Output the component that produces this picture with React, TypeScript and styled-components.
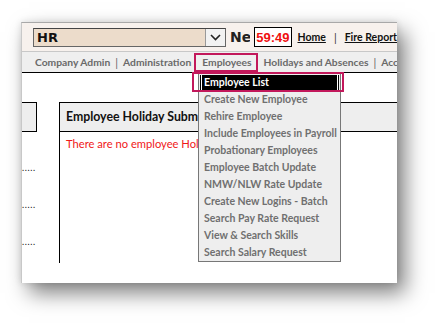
import React from "react";
import styled, { createGlobalStyle } from "styled-components";

const GlobalStyle = createGlobalStyle`
  body {
    margin: 0;
    background: #fff;
    font-family: "Lato", "Liberation Sans", sans-serif;
  }
`;

const Stage = styled.div`
  padding: 22px 0 0 21px;
  height: 325px;
  box-sizing: border-box;
`;

const Frame = styled.div`
  position: relative;
  width: 376px;
  height: 261px;
  overflow: hidden;
  background: #fff;
  border-top: 1px solid #a8a8a8;
  border-left: 1px solid #c8c8c8;
  box-sizing: border-box;
  box-shadow: 8px 10px 20px rgba(0, 0, 0, 0.5), 0 0 7px rgba(0, 0, 0, 0.12);
`;

const TopBar = styled.div`
  display: flex;
  align-items: center;
  height: 28px;
  padding-left: 11px;
  background: #f7f1ed;
  border-bottom: 1px solid #c8c8c8;
  white-space: nowrap;
`;

const Select = styled.div`
  display: flex;
  align-items: stretch;
  width: 198px;
  height: 19px;
  box-sizing: border-box;
  border: 1px solid #666;
  border-top-color: #444;
  background: #ecdccb;
`;

const SelectValue = styled.span`
  flex: 1;
  padding-left: 3px;
  font-family: "DejaVu Sans", sans-serif;
  font-weight: bold;
  font-size: 13px;
  line-height: 17px;
  color: #111;
`;

const SelectArrow = styled.span`
  display: flex;
  align-items: center;
  justify-content: center;
  width: 19px;
  background: #f2f2f2;
  border-left: 1px solid #999;
`;

const Clipped = styled.span`
  width: 21px;
  margin: 0 4px 0 4px;
  overflow: hidden;
  font-family: "DejaVu Sans", sans-serif;
  font-weight: bold;
  font-size: 14px;
  color: #222;
`;

const Timer = styled.span`
  display: inline-flex;
  align-items: center;
  justify-content: center;
  width: 38px;
  height: 20px;
  margin-right: 6px;
  box-sizing: border-box;
  border: 1px solid #000;
  background: #fff;
  color: #f01010;
  font-family: "Liberation Sans", sans-serif;
  font-weight: bold;
  font-size: 13px;
`;

const TopLink = styled.a`
  font-weight: bold;
  font-size: 10.5px;
  color: #111;
  text-decoration: underline;
`;

const Pipe = styled.span<{ $gap?: number; $color?: string }>`
  margin: 0 ${(p) => p.$gap ?? 5}px;
  color: ${(p) => p.$color ?? "#333"};
  font-size: 11px;
`;

const NavBar = styled.div`
  display: flex;
  align-items: center;
  height: 20px;
  padding-left: 13px;
  background: #efefef;
  border-bottom: 1px solid #000;
  white-space: nowrap;
`;

const NavItem = styled.span<{ $active?: boolean }>`
  font-weight: bold;
  font-size: 10.3px;
  color: #6a6a6a;
  ${(p) =>
    p.$active &&
    `
    height: 19px;
    box-sizing: border-box;
    display: inline-flex;
    align-items: center;
    padding: 0 4px 0 6px;
    margin: 0 6px 0 3px;
    border: 2px solid #c2185b;
  `}
`;

const Content = styled.div`
  display: flex;
  height: 190px;
`;

const SideColumn = styled.div`
  width: 37px;
  flex-shrink: 0;
  padding-top: 29px;
`;

const SideHeader = styled.div`
  width: 15px;
  height: 30px;
  box-sizing: border-box;
  background: #eee;
  border: 1px solid #000;
  border-left: none;
`;

const Leader = styled.div<{ $top: number }>`
  margin-top: ${(p) => p.$top}px;
  font-size: 9px;
  line-height: 6px;
  height: 6px;
  letter-spacing: 0.6px;
  color: #111;
`;

const Panel = styled.div`
  flex: 1;
  margin-top: 29px;
  border-left: 1px solid #000;
  border-top: 1px solid #000;
`;

const PanelHeader = styled.div`
  height: 28px;
  padding-left: 6px;
  background: #eee;
  border-bottom: 1px solid #000;
  font-weight: bold;
  font-size: 12.3px;
  line-height: 28px;
  color: #111;
  white-space: nowrap;
`;

const Notice = styled.div`
  padding: 5px 0 0 6px;
  font-size: 11.2px;
  color: #f01818;
  white-space: nowrap;
`;

const Menu = styled.ul`
  position: absolute;
  left: 176px;
  top: 50px;
  width: 143px;
  margin: 0;
  padding: 0;
  list-style: none;
  background: #eee;
  border: 1px solid #777;
  box-sizing: border-box;
`;

const MenuItem = styled.li<{ $active?: boolean }>`
  height: 17px;
  padding-left: 5px;
  font-weight: bold;
  font-size: 10.5px;
  line-height: 17px;
  color: ${(p) => (p.$active ? "#fff" : "#707070")};
  white-space: nowrap;
  ${(p) =>
    p.$active &&
    `
    margin: 1px;
    height: 15px;
    line-height: 15px;
    padding-left: 4px;
    background: #000;
    box-shadow: inset 1px 0 0 #000, inset 2px 0 0 #fff, inset -1px 0 0 #000, inset -2px 0 0 #fff;
  `}
`;

const Callout = styled.div`
  position: absolute;
  left: 170px;
  top: 49px;
  width: 152px;
  height: 20px;
  box-sizing: border-box;
  border: 2px solid #c2185b;
`;

const menuItems = [
  "Employee List",
  "Create New Employee",
  "Rehire Employee",
  "Include Employees in Payroll",
  "Probationary Employees",
  "Employee Batch Update",
  "NMW/NLW Rate Update",
  "Create New Logins - Batch",
  "Search Pay Rate Request",
  "View & Search Skills",
  "Search Salary Request",
];

export default function App() {
  return (
    <>
      <GlobalStyle />
      <Stage>
        <Frame>
          <TopBar>
            <Select>
              <SelectValue>HR</SelectValue>
              <SelectArrow>
                <svg width="11" height="7" viewBox="0 0 11 7">
                  <path d="M1 1l4.5 4.5L10 1" fill="none" stroke="#222" strokeWidth="1.6" />
                </svg>
              </SelectArrow>
            </Select>
            <Clipped>New</Clipped>
            <Timer>59:49</Timer>
            <TopLink>Home</TopLink>
            <Pipe $gap={8}>|</Pipe>
            <TopLink>Fire Report</TopLink>
          </TopBar>
          <NavBar>
            <NavItem>Company Admin</NavItem>
            <Pipe $color="#666">|</Pipe>
            <NavItem>Administration</NavItem>
            <NavItem $active>Employees</NavItem>
            <NavItem>Holidays and Absences</NavItem>
            <Pipe $color="#666">|</Pipe>
            <NavItem>Accounts</NavItem>
          </NavBar>
          <Content>
            <SideColumn>
              <SideHeader />
              <Leader $top={33}>.....</Leader>
              <Leader $top={31}>.....</Leader>
              <Leader $top={31}>.....</Leader>
            </SideColumn>
            <Panel>
              <PanelHeader>Employee Holiday Submissions</PanelHeader>
              <Notice>There are no employee Holiday Submissions</Notice>
            </Panel>
          </Content>
          <Menu>
            {menuItems.map((item, i) => (
              <MenuItem key={item} $active={i === 0}>
                {item}
              </MenuItem>
            ))}
          </Menu>
          <Callout />
        </Frame>
      </Stage>
    </>
  );
}
